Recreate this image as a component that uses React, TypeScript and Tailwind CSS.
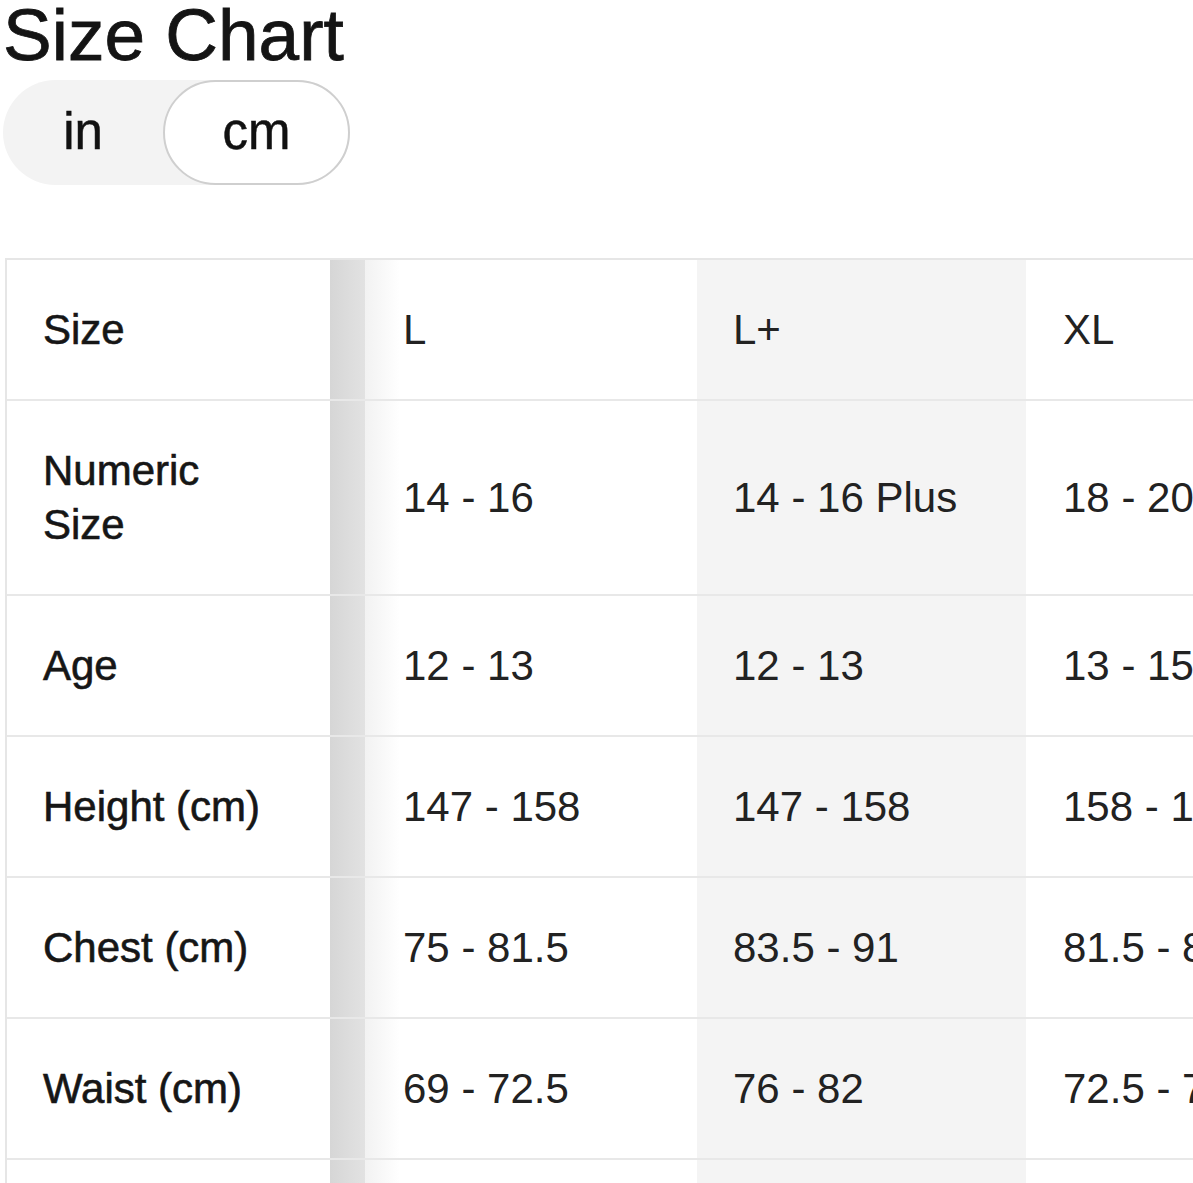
import { FC } from "react";

const rows: { label: string; values: string[]; tall?: boolean }[] = [
  { label: "Size", values: ["L", "L+", "XL"] },
  { label: "Numeric Size", values: ["14 - 16", "14 - 16 Plus", "18 - 20"], tall: true },
  { label: "Age", values: ["12 - 13", "12 - 13", "13 - 15"] },
  { label: "Height (cm)", values: ["147 - 158", "147 - 158", "158 - 170"] },
  { label: "Chest (cm)", values: ["75 - 81.5", "83.5 - 91", "81.5 - 88"] },
  { label: "Waist (cm)", values: ["69 - 72.5", "76 - 82", "72.5 - 76"] },
  { label: "Hip (cm)", values: ["81 - 88", "91 - 98", "88 - 94"] },
];

const SizeRow: FC<{ label: string; values: string[]; tall?: boolean }> = ({
  label,
  values,
  tall,
}) => {
  return (
    <div
      className={
        tall
          ? "grid grid-cols-[323px_367px_329px_330px] h-[195px] border-b-2 border-[#e8e8e8]"
          : "grid grid-cols-[323px_367px_329px_330px] h-[141px] border-b-2 border-[#e8e8e8]"
      }
    >
      <div className="flex items-center pl-[36px] bg-white">
        <span className="block max-w-[236px] text-[42px] leading-[54px] text-[#161616] [-webkit-text-stroke:0.6px_#161616]">
          {label}
        </span>
      </div>
      <div className="flex items-center pl-[73px] bg-[linear-gradient(to_right,#d6d6d6_0px,#e2e2e2_35px,#f2f2f2_35px,#ffffff_70px)]">
        <span className="text-[42px] whitespace-nowrap text-[#222]">{values[0]}</span>
      </div>
      <div className="flex items-center pl-[36px] bg-[#f4f4f4]">
        <span className="text-[42px] whitespace-nowrap text-[#222]">{values[1]}</span>
      </div>
      <div className="flex items-center pl-[37px] bg-white">
        <span className="text-[42px] whitespace-nowrap text-[#222]">{values[2]}</span>
      </div>
    </div>
  );
};

export default function App() {
  return (
    <div className="w-[1193px] h-[1183px] overflow-hidden bg-white font-['Liberation_Sans',Arial,sans-serif] text-[#1a1a1a] pl-[3px]">
      <h1 className="text-[73px] leading-[70px] text-[#141414] [-webkit-text-stroke:0.8px_#141414]">
        Size Chart
      </h1>

      {/* unit toggle */}
      <div className="mt-[10px] w-[347px] h-[105px] rounded-full bg-[#f3f3f3] flex">
        <button
          type="button"
          className="w-[160px] h-full flex items-center justify-center text-[51px] text-[#111] [-webkit-text-stroke:0.5px_#111]"
        >
          in
        </button>
        <button
          type="button"
          className="flex-1 h-full rounded-full bg-white border-2 border-[#cfcfcf] flex items-center justify-center text-[51px] text-[#111] [-webkit-text-stroke:0.5px_#111]"
        >
          cm
        </button>
      </div>

      <div className="mt-[73px] ml-[2px] w-[1400px] border-l-2 border-t-2 border-[#e6e6e6]">
        {rows.map((r) => (
          <SizeRow key={r.label} label={r.label} values={r.values} tall={r.tall} />
        ))}
      </div>
    </div>
  );
}
